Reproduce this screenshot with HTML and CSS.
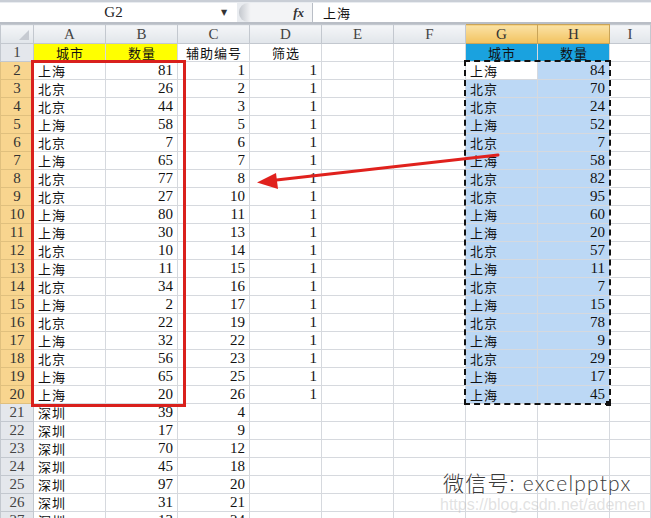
FILE: index.html
```html
<!DOCTYPE html>
<html>
<head>
<meta charset="utf-8">
<link rel="stylesheet" href="styles.css">
</head>
<body>
<div class="app">
  <div class="fbar">
    <div class="namebox"><span class="nm">G2</span><span class="dd">▼</span></div>
    <div class="grip"></div>
    <div class="fx">fx</div>
    <div class="finput">上海</div>
  </div>
  <table class="sheet">
    <colgroup>
      <col class="w0"><col class="w"><col class="w"><col class="w"><col class="w"><col class="w"><col class="w"><col class="w"><col class="w"><col>
    </colgroup>
    <tr class="hr"><th class="corner"><span class="tri"></span></th><th>A</th><th>B</th><th>C</th><th>D</th><th>E</th><th>F</th><th class="hs">G</th><th class="hs">H</th><th>I</th></tr>
    <tr><th class="rh">1</th><td class="cj ctr yl">城市</td><td class="cj ctr yl">数量</td><td class="cj ctr">辅助编号</td><td class="cj ctr">筛选</td><td></td><td></td><td class="cj ctr bl">城市</td><td class="cj ctr bl">数量</td><td></td></tr>
    <tr><th class="rh rs">2</th><td class="cj">上海</td><td class="n">81</td><td class="n">1</td><td class="n">1</td><td></td><td></td><td class="cj">上海</td><td class="n sl">84</td><td></td></tr>
    <tr><th class="rh rs">3</th><td class="cj">北京</td><td class="n">26</td><td class="n">2</td><td class="n">1</td><td></td><td></td><td class="cj sl">北京</td><td class="n sl">70</td><td></td></tr>
    <tr><th class="rh rs">4</th><td class="cj">北京</td><td class="n">44</td><td class="n">3</td><td class="n">1</td><td></td><td></td><td class="cj sl">北京</td><td class="n sl">24</td><td></td></tr>
    <tr><th class="rh rs">5</th><td class="cj">上海</td><td class="n">58</td><td class="n">5</td><td class="n">1</td><td></td><td></td><td class="cj sl">上海</td><td class="n sl">52</td><td></td></tr>
    <tr><th class="rh rs">6</th><td class="cj">北京</td><td class="n">7</td><td class="n">6</td><td class="n">1</td><td></td><td></td><td class="cj sl">北京</td><td class="n sl">7</td><td></td></tr>
    <tr><th class="rh rs">7</th><td class="cj">上海</td><td class="n">65</td><td class="n">7</td><td class="n">1</td><td></td><td></td><td class="cj sl">上海</td><td class="n sl">58</td><td></td></tr>
    <tr><th class="rh rs">8</th><td class="cj">北京</td><td class="n">77</td><td class="n">8</td><td class="n">1</td><td></td><td></td><td class="cj sl">北京</td><td class="n sl">82</td><td></td></tr>
    <tr><th class="rh rs">9</th><td class="cj">北京</td><td class="n">27</td><td class="n">10</td><td class="n">1</td><td></td><td></td><td class="cj sl">北京</td><td class="n sl">95</td><td></td></tr>
    <tr><th class="rh rs">10</th><td class="cj">上海</td><td class="n">80</td><td class="n">11</td><td class="n">1</td><td></td><td></td><td class="cj sl">上海</td><td class="n sl">60</td><td></td></tr>
    <tr><th class="rh rs">11</th><td class="cj">上海</td><td class="n">30</td><td class="n">13</td><td class="n">1</td><td></td><td></td><td class="cj sl">上海</td><td class="n sl">20</td><td></td></tr>
    <tr><th class="rh rs">12</th><td class="cj">北京</td><td class="n">10</td><td class="n">14</td><td class="n">1</td><td></td><td></td><td class="cj sl">北京</td><td class="n sl">57</td><td></td></tr>
    <tr><th class="rh rs">13</th><td class="cj">上海</td><td class="n">11</td><td class="n">15</td><td class="n">1</td><td></td><td></td><td class="cj sl">上海</td><td class="n sl">11</td><td></td></tr>
    <tr><th class="rh rs">14</th><td class="cj">北京</td><td class="n">34</td><td class="n">16</td><td class="n">1</td><td></td><td></td><td class="cj sl">北京</td><td class="n sl">7</td><td></td></tr>
    <tr><th class="rh rs">15</th><td class="cj">上海</td><td class="n">2</td><td class="n">17</td><td class="n">1</td><td></td><td></td><td class="cj sl">上海</td><td class="n sl">15</td><td></td></tr>
    <tr><th class="rh rs">16</th><td class="cj">北京</td><td class="n">22</td><td class="n">19</td><td class="n">1</td><td></td><td></td><td class="cj sl">北京</td><td class="n sl">78</td><td></td></tr>
    <tr><th class="rh rs">17</th><td class="cj">上海</td><td class="n">32</td><td class="n">22</td><td class="n">1</td><td></td><td></td><td class="cj sl">上海</td><td class="n sl">9</td><td></td></tr>
    <tr><th class="rh rs">18</th><td class="cj">北京</td><td class="n">56</td><td class="n">23</td><td class="n">1</td><td></td><td></td><td class="cj sl">北京</td><td class="n sl">29</td><td></td></tr>
    <tr><th class="rh rs">19</th><td class="cj">上海</td><td class="n">65</td><td class="n">25</td><td class="n">1</td><td></td><td></td><td class="cj sl">上海</td><td class="n sl">17</td><td></td></tr>
    <tr><th class="rh rs">20</th><td class="cj">上海</td><td class="n">20</td><td class="n">26</td><td class="n">1</td><td></td><td></td><td class="cj sl">上海</td><td class="n sl">45</td><td></td></tr>
    <tr><th class="rh">21</th><td class="cj">深圳</td><td class="n">39</td><td class="n">4</td><td></td><td></td><td></td><td></td><td></td><td></td></tr>
    <tr><th class="rh">22</th><td class="cj">深圳</td><td class="n">17</td><td class="n">9</td><td></td><td></td><td></td><td></td><td></td><td></td></tr>
    <tr><th class="rh">23</th><td class="cj">深圳</td><td class="n">70</td><td class="n">12</td><td></td><td></td><td></td><td></td><td></td><td></td></tr>
    <tr><th class="rh">24</th><td class="cj">深圳</td><td class="n">45</td><td class="n">18</td><td></td><td></td><td></td><td></td><td></td><td></td></tr>
    <tr><th class="rh">25</th><td class="cj">深圳</td><td class="n">97</td><td class="n">20</td><td></td><td></td><td></td><td></td><td></td><td></td></tr>
    <tr><th class="rh">26</th><td class="cj">深圳</td><td class="n">31</td><td class="n">21</td><td></td><td></td><td></td><td></td><td></td><td></td></tr>
    <tr><th class="rh">27</th><td class="cj">深圳</td><td class="n">13</td><td class="n">24</td><td></td><td></td><td></td><td></td><td></td><td></td></tr>
  </table>

  <div class="redbox"></div>
  <div class="ants"></div>
  <div class="handle"></div>
  <svg class="arrow" width="651" height="518" viewBox="0 0 651 518">
    <line x1="498" y1="155" x2="272" y2="180.5" stroke="#e0211d" stroke-width="3" stroke-linecap="round"/>
    <polygon points="257,182.5 276,173 278,189" fill="#e0211d"/>
  </svg>
  <div class="wm">微信号: excelpptpx</div>
  <div class="wm2">https://blog.csdn.net/ademen</div>
</div>
</body>
</html>
```
FILE: styles.css
```css
html, body { margin: 0; padding: 0; background: #fff; }
body { width: 651px; height: 518px; overflow: hidden; }
.app { position: relative; width: 651px; height: 518px; overflow: hidden; }

.fbar {
  height: 24px;
  box-sizing: border-box;
  display: flex;
  align-items: stretch;
  background: #e9ecf0;
  border-top: 2px solid #c9ced6;
  border-bottom: 2px solid #b9bec6;
  padding: 1px 0 0 0;
}
.namebox {
  width: 237px;
  background: #fff;
  display: flex;
  align-items: center;
  font-family: "Liberation Serif", serif;
  font-size: 15px;
  color: #222;
}
.namebox .nm { flex: 1; text-align: center; padding-left: 6px; }
.namebox .dd { font-size: 8px; color: #333; width: 16px; font-family: "DejaVu Sans", sans-serif; }
.grip {
  width: 12px;
  margin: 0 0 0 2px;
  border-radius: 9px 0 0 9px;
  background: linear-gradient(90deg, #c4c8ce, #f4f5f7);
}
.fx {
  width: 62px;
  background: #f3f4f6;
  text-align: right;
  padding-right: 8px;
  box-sizing: border-box;
  font-family: "Liberation Serif", serif;
  font-style: italic;
  font-weight: bold;
  font-size: 13px;
  line-height: 19px;
  color: #333;
  border-right: 1px solid #b9bec6;
}
.finput {
  flex: 1;
  background: #fff;
  font-family: "Noto Sans CJK SC", sans-serif;
  font-size: 13px;
  letter-spacing: 1px;
  line-height: 19px;
  padding-left: 10px;
  color: #111;
}

.sheet {
  border-collapse: collapse;
  table-layout: fixed;
  width: 651px;
}
.sheet col.w0 { width: 33px; }
.sheet col.w { width: 72px; }
.sheet td, .sheet th {
  padding: 0;
  border: 1px solid #d6d9de;
  height: 17px;
  overflow: hidden;
  white-space: nowrap;
  line-height: 17px;
}
.sheet tr.hr th {
  height: 18px;
  background: linear-gradient(#f4f6f8, #e1e5ea);
  border: 1px solid #c3c8cf;
  font-family: "Liberation Serif", serif;
  font-weight: normal;
  font-size: 15px;
  color: #444;
}
.sheet tr.hr th.hs {
  background: linear-gradient(#fae2a5, #f2c25f);
  border-color: #c9a458;
  color: #333;
}
.corner { position: relative; }
.tri {
  position: absolute;
  right: 4px; bottom: 3px;
  width: 0; height: 0;
  border-left: 10px solid transparent;
  border-bottom: 10px solid #c6cad1;
}
.sheet th.rh {
  background: #e4e7ec;
  border-color: #c3c8cf;
  font-family: "Liberation Serif", serif;
  font-weight: normal;
  font-size: 15px;
  color: #444;
  text-align: center;
}
.sheet th.rh.rs {
  background: #f8d58f;
  border-color: #e0c07e;
  color: #333;
}
.cj {
  font-family: "Noto Sans CJK SC", sans-serif;
  font-size: 13px;
  letter-spacing: 1px;
  color: #111;
  padding-left: 4px !important;
}
.ctr { text-align: center; padding-left: 1px !important; }
.n {
  font-family: "Liberation Serif", serif;
  font-size: 15px;
  color: #111;
  text-align: right;
  padding-right: 4px !important;
}
.yl { background: #ffff00; }
.bl { background: #1aa2df; }
.sl { background: #bcd8f5; }

.redbox {
  position: absolute;
  left: 31px; top: 60px;
  width: 155px; height: 347px;
  box-sizing: border-box;
  border: 3px solid #d9201c;
}
.ants {
  position: absolute;
  left: 464px; top: 60px;
  width: 147px; height: 345px;
  box-sizing: border-box;
  border: 2px dashed #111;
}
.handle {
  position: absolute;
  left: 606px; top: 401px;
  width: 5px; height: 5px;
  background: #111;
}
.arrow { position: absolute; left: 0; top: 0; }
.wm {
  position: absolute;
  left: 443px; top: 467px;
  font-family: "Lato", "Noto Sans CJK SC", sans-serif;
  font-weight: 300;
  font-size: 21px;
  color: #3a3a3a;
  text-shadow: 0 0 1px #fff, 0 0 2px #fff;
  letter-spacing: 1.2px;
}
.wm2 {
  position: absolute;
  left: 440px; top: 496px;
  font-family: "Liberation Sans", sans-serif;
  font-size: 16px;
  color: rgba(190, 190, 190, 0.45);
}
```
